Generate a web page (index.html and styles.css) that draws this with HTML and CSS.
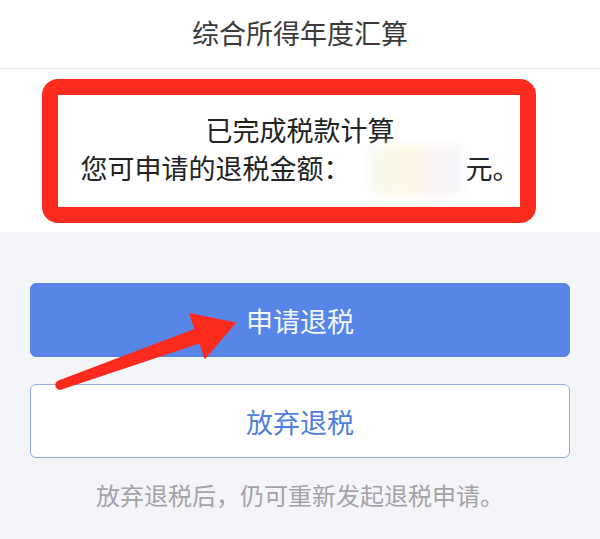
FILE: index.html
```html
<!DOCTYPE html>
<html lang="zh-CN">
<head>
  <meta charset="UTF-8">
  <title>综合所得年度汇算</title>
  <link rel="stylesheet" href="styles.css">
</head>
<body>

<div class="page">
  <div class="title">综合所得年度汇算</div>

  <div class="result">
    <div class="frame">
      <div class="msg">已完成税款计算</div>
      <div class="msg">您可申请的退税金额：<span class="amount"><span class="blur"></span></span>元。</div>
    </div>
  </div>

  <div class="actions">
    <button class="btn primary">申请退税</button>
    <button class="btn ghost">放弃退税</button>
    <p class="note">放弃退税后，仍可重新发起退税申请。</p>
  </div>

  <svg class="arrow" viewBox="0 0 600 539" width="600" height="539">
    <path d="M58.7 381.2 L195.2 329.4 L190 314 L235 323 L205 358 L199.8 342.6 L61.3 388.8 A4 4 0 0 1 58.7 381.2 Z"
          fill="#fd2a1e" stroke="#fd2a1e" stroke-width="1.5" stroke-linejoin="round"/>
  </svg>
</div>

</body>
</html>
```

FILE: styles.css
```css
body { margin: 0; font-family: "Noto Sans CJK SC", "Noto Sans", sans-serif; background: #f4f5f9; }
.page { position: relative; width: 600px; height: 539px; overflow: hidden; background: #f4f5f9; }
.title { height: 68px; line-height: 66px; text-align: center; font-size: 27px; color: #3a3a3a; background: #fff; border-bottom: 1px solid #e6e6e8; }
.result { background: #fff; padding: 10px 0 9px; }
.frame { box-sizing: border-box; width: 494px; height: 144px; margin-left: 42px; border: 16px solid #fd2a1e; border-radius: 16px; padding: 16px 0 0 22px; text-align: center; }
.msg { font-size: 27px; line-height: 38px; color: #222; white-space: nowrap; }
.amount { display: inline-block; position: relative; width: 115px; height: 30px; vertical-align: middle; }
.blur { position: absolute; left: 18px; top: -12px; width: 94px; height: 52px; filter: blur(6px); opacity: 0.8;
  background: linear-gradient(90deg, #f1f9ee 0%, #fff7dc 40%, #fdf1ee 62%, #f1f3fb 100%); border-radius: 12px; }
.actions { padding: 51px 30px 0; display: flex; flex-direction: column; }
.btn { height: 74px; border-radius: 6px; font-family: inherit; font-size: 27px; }
.primary { background: #5886e8; color: #f2f6ff; border: 1px solid #5a86e2; }
.ghost { margin-top: 27px; background: #fff; color: #4f80e2; border: 1px solid #8eaee3; }
.note { margin: 20px 0 0; text-align: center; font-size: 24px; line-height: 34px; color: #a3a3a8; }
.arrow { position: absolute; left: 0; top: 0; pointer-events: none; }
```
